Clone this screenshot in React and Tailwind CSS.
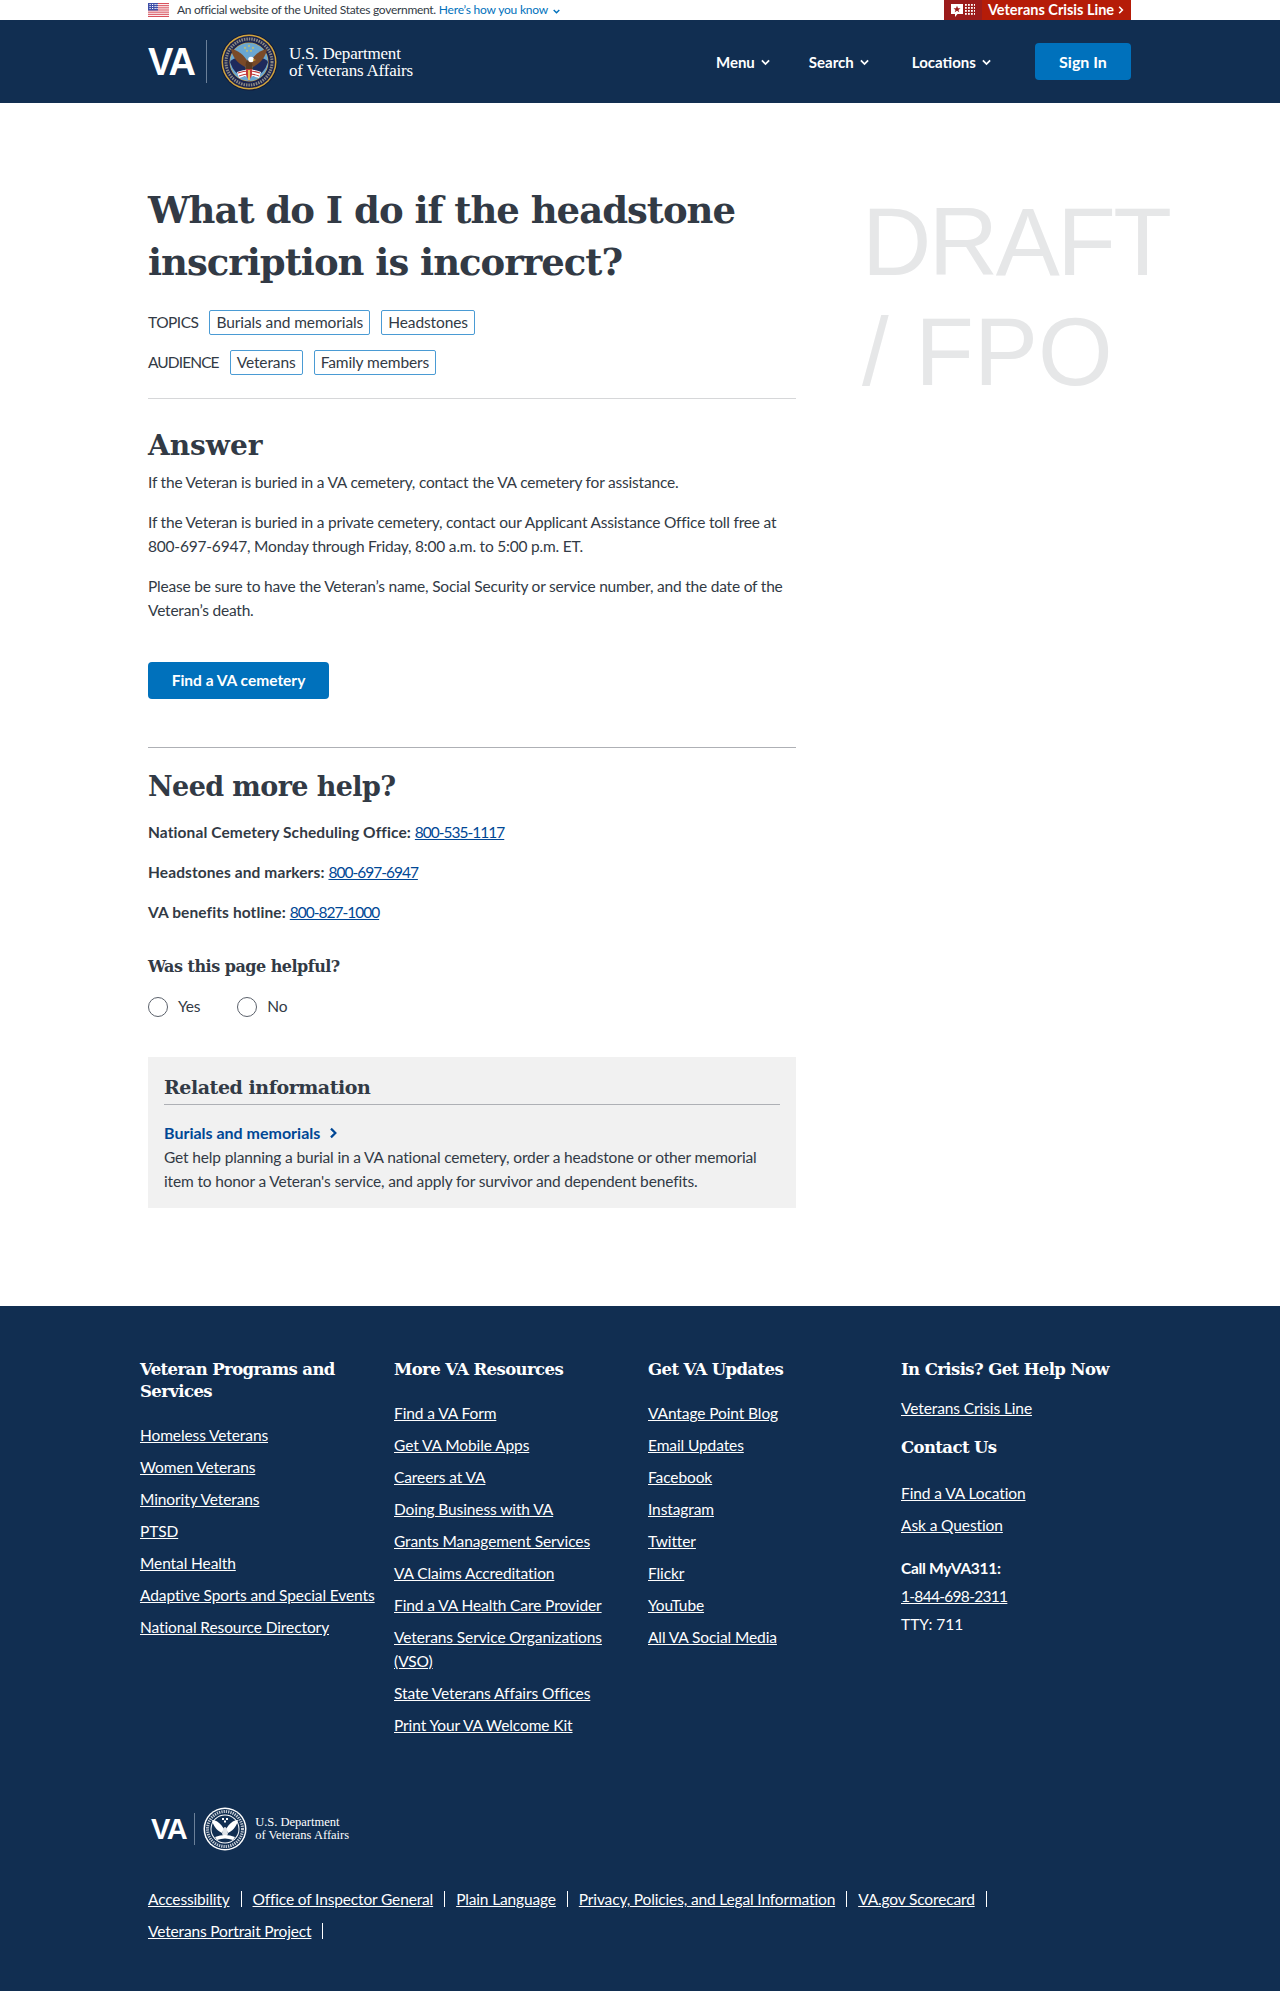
import React from "react";

const sans = "font-['Lato','Noto_Sans',sans-serif]";
const slab = "font-['DejaVu_Serif','Liberation_Serif',serif]";

function Chevron({ className = "" }) {
  return (
    <svg viewBox="0 0 10 7" className={className} fill="none" stroke="currentColor" strokeWidth="2">
      <path d="M1 1.2 5 5.2 9 1.2" />
    </svg>
  );
}

function Flag() {
  return (
    <svg viewBox="0 0 21 14" className="w-[21px] h-[14px] shrink-0">
      <rect width="21" height="14" fill="#fff" />
      {[0, 2.15, 4.3, 6.45, 8.6, 10.75, 12.9].map((y) => (
        <rect key={y} y={y} width="21" height="1.1" fill="#d8505c" />
      ))}
      <rect width="10" height="7.5" fill="#3f4fa8" />
      {[1, 3, 5].map((y) =>
        [1.5, 4, 6.5, 8.5].map((x) => <rect key={x + "-" + y} x={x} y={y} width="1.2" height="1" fill="#fff" />)
      )}
    </svg>
  );
}

function ColorSeal() {
  return (
    <svg viewBox="0 0 58 58" className="w-[58px] h-[58px] shrink-0">
      <circle cx="29" cy="29" r="28.5" fill="#111a3a" />
      <circle cx="29" cy="29" r="27.5" fill="#d3a63c" />
      <circle cx="29" cy="29" r="26" fill="#1b2450" />
      <circle cx="29" cy="29" r="23" fill="none" stroke="#b9b39a" strokeWidth="3" strokeDasharray="1.5 1" opacity=".7" />
      <circle cx="29" cy="29" r="19.5" fill="#d3a63c" />
      <circle cx="29" cy="29" r="19" fill="#6aa7d2" />
      <path d="M10 29 Q16 21 25 30 L25 44 Q14 42 10 29Z" fill="#1e2a5c" />
      <path d="M48 29 Q42 21 33 30 L33 44 Q44 42 48 29Z" fill="#1e2a5c" />
      <path d="M28 29 C24 22 18 17 11 16 C12 23 17 30 25 34Z" fill="#7a4a28" />
      <path d="M30 29 C34 22 40 17 47 16 C46 23 41 30 33 34Z" fill="#7a4a28" />
      <path d="M26 29 Q29 24 32 29 L33 36 L29 41 L25 36Z" fill="#5c3a20" />
      <circle cx="31" cy="26.5" r="2.8" fill="#fff" />
      <path d="M33 26 l3 1 -3 1z" fill="#e0b030" />
      <path d="M17 39 Q29 34 41 39 L39 45 Q29 41 19 45Z" fill="#fff" />
      <path d="M18 40 Q29 36 40 40 M19 43 Q29 39 39 43" stroke="#c23a3a" strokeWidth="1.2" fill="none" />
      <path d="M26 36 h6 v6 l-3 6 -3 -6z" fill="#c23a3a" />
      <path d="M28 37 h2 v10 h-2z" fill="#e8c25a" />
      {[[25, 15], [29, 13], [33, 15], [27, 18], [31, 18]].map(([x, y]) => (
        <path key={x + "" + y} d={`M${x} ${y - 1.5} L${x + 1} ${y + 1} L${x - 1.3} ${y - 0.5} H${x + 1.3} L${x - 1} ${y + 1}Z`} fill="#e8c84a" />
      ))}
    </svg>
  );
}

function WhiteSeal() {
  return (
    <svg viewBox="0 0 44 44" className="w-[44px] h-[44px] shrink-0">
      <circle cx="22" cy="22" r="21.5" fill="#fff" />
      <circle cx="22" cy="22" r="20" fill="#112e51" />
      <circle cx="22" cy="22" r="17.5" fill="none" stroke="#fff" strokeWidth="3" strokeDasharray="1.3 1" opacity=".75" />
      <circle cx="22" cy="22" r="14.5" fill="#fff" />
      <circle cx="22" cy="22" r="13.5" fill="#112e51" />
      <path d="M21 22 C18 17 14 13 9 13 C10 18 13 23 19 26Z" fill="#fff" />
      <path d="M23 22 C26 17 30 13 35 13 C34 18 31 23 25 26Z" fill="#fff" />
      <path d="M20 22 Q22 18 24 22 L25 27 L22 31 L19 27Z" fill="#dfe3e8" />
      <path d="M12 30 Q22 26 32 30 L30 33 Q22 30 14 33Z" fill="#fff" />
      <path d="M19 11h2v2h-2z M23 11h2v2h-2z M21 13.5h2v2h-2z" fill="#fff" />
    </svg>
  );
}

function CrisisIcon() {
  return (
    <svg viewBox="0 0 24 15" className="w-[24px] h-[15px]">
      <path d="M0 1h12v10H6.5L4 14v-3H0z" fill="#fff" />
      <path d="M6 2.8 L7 5.3 H9.5 L7.5 6.9 L8.3 9.3 L6 7.8 L3.7 9.3 L4.5 6.9 L2.5 5.3 H5Z" fill="#9b1c1c" />
      {[15, 18, 21, 24].map((x) =>
        [2, 5, 8, 11].map((y) => <rect key={x + "-" + y} x={x - 1} y={y - 1} width="1.8" height="1.8" fill="#fff" />)
      )}
    </svg>
  );
}

function Tag({ children }) {
  return (
    <span className="inline-flex h-[25px] items-center rounded-[2px] border border-[#4a9bd4] px-[6px] text-[15.5px] tracking-[-0.1px] text-[#323a45]">
      {children}
    </span>
  );
}

function NavItem({ children, className = "" }) {
  return (
    <span className={`flex items-center gap-[6px] text-[15px] font-bold tracking-normal text-white ${className}`}>
      {children}
      <Chevron className="w-[9px] h-[7px]" />
    </span>
  );
}

function FootLink({ children }) {
  return <a className="block text-[15.5px] leading-[24px] tracking-[-0.1px] text-white underline">{children}</a>;
}

function FootCol({ title, links, mb = "mb-[20px]", titleClass = "text-[16.5px] tracking-[-0.6px]" }) {
  return (
    <div className="pr-[16px]">
      <h3 className={`${slab} ${mb} ${titleClass} font-bold leading-[22px] text-white`}>{title}</h3>
      <div className="flex flex-col gap-y-[8px]">
        {links.map((l) => (
          <FootLink key={l}>{l}</FootLink>
        ))}
      </div>
    </div>
  );
}

function Radio({ label }) {
  return (
    <label className="flex items-center gap-[10px]">
      <span className="h-[20px] w-[20px] rounded-full border border-[#5b616b] bg-white" />
      <span className="text-[15.5px] tracking-[-0.2px]">{label}</span>
    </label>
  );
}

function Phone({ children }) {
  return <a className="font-normal tracking-[-1px] text-[#004795] underline">{children}</a>;
}

export default function App() {
  return (
    <div className={`${sans} w-[1280px] h-[1991px] bg-white text-[#323a45]`}>
      {/* Government banner */}
      <div className="h-[20px] bg-white">
        <div className="ml-[148px] flex h-full w-[983px] items-center">
          <Flag />
          <span className="ml-[8px] text-[12px] tracking-[-0.3px] text-[#323a45]">An official website of the United States government.</span>
          <span className="ml-[3px] text-[12px] tracking-[-0.2px] text-[#0071bc]">Here’s how you know</span>
          <Chevron className="ml-[5px] mt-[2px] h-[5px] w-[7px] text-[#0071bc]" />
          <div className="ml-auto flex h-full w-[187px] items-stretch">
            <div className="flex w-[38px] items-center justify-center bg-[#9b1c1c]">
              <CrisisIcon />
            </div>
            <div className="flex flex-1 items-center justify-center gap-[3px] bg-[#b51c08] text-[14.5px] font-bold text-white">
              Veterans Crisis Line
              <Chevron className="h-[6px] w-[8px] -rotate-90" />
            </div>
          </div>
        </div>
      </div>

      {/* Header */}
      <header className="h-[83px] bg-[#112e51]">
        <div className="ml-[148px] flex h-full w-[983px] items-center">
          <span className="font-['Liberation_Sans',sans-serif] text-[38px] font-bold leading-none tracking-[-2px] text-white">VA</span>
          <span className="ml-[12px] h-[43px] w-px bg-[#6b8099]" />
          <span className="ml-[13px]"><ColorSeal /></span>
          <div className="ml-[11px] font-['Liberation_Serif',serif] text-[17px] leading-[17px] tracking-[-0.2px] text-white">
            <div>U.S. Department</div>
            <div>of Veterans Affairs</div>
          </div>
          <NavItem className="ml-[303px] mt-[1px]">Menu</NavItem>
          <NavItem className="ml-[39px] mt-[1px]">Search</NavItem>
          <NavItem className="ml-[43px] mt-[1px]">Locations</NavItem>
          <a className="ml-auto flex h-[37px] w-[96px] items-center justify-center rounded-[4px] bg-[#0071bc] text-[16px] font-bold text-white">
            Sign In
          </a>
        </div>
      </header>

      {/* Main */}
      <main className="ml-[148px] flex h-[1203px] w-[983px]">
        <div className="w-[648px] shrink-0">
          <h1 className={`${slab} mt-[81px] text-[37px] font-bold leading-[52px] tracking-[-1px]`}>
            What do I do if the headstone inscription is incorrect?
          </h1>
          <div className="mt-[22px] flex items-center gap-[11px]">
            <span className="text-[15.5px] tracking-[-0.5px]">TOPICS</span>
            <Tag>Burials and memorials</Tag>
            <Tag>Headstones</Tag>
          </div>
          <div className="mt-[15px] flex items-center gap-[11px]">
            <span className="text-[15.5px] tracking-[-0.9px]">AUDIENCE</span>
            <Tag>Veterans</Tag>
            <Tag>Family members</Tag>
          </div>
          <hr className="mt-[23px] border-0 border-t border-[#d6d7d9]" />
          <h2 className={`${slab} mt-[27px] text-[28px] font-bold leading-[40px]`}>Answer</h2>
          <div className="mt-[4px] text-[15.5px] leading-[24px] tracking-[-0.2px]">
            <p>If the Veteran is buried in a VA cemetery, contact the VA cemetery for assistance.</p>
            <p className="mt-[16px]">
              If the Veteran is buried in a private cemetery, contact our Applicant Assistance Office toll free at
              800-697-6947, Monday through Friday, 8:00 a.m. to 5:00 p.m. ET.
            </p>
            <p className="mt-[16px]">
              Please be sure to have the Veteran’s name, Social Security or service number, and the date of the Veteran’s death.
            </p>
          </div>
          <a className="mt-[40px] flex h-[37px] w-[181px] items-center justify-center rounded-[4px] bg-[#0071bc] text-[15.5px] font-bold text-white">
            Find a VA cemetery
          </a>
          <hr className="mt-[48px] border-0 border-t border-[#aeb0b5]" />
          <h2 className={`${slab} mt-[19px] text-[27px] font-bold leading-[40px] tracking-[-0.6px]`}>Need more help?</h2>
          <div className="mt-[13px] text-[15.5px] leading-[24px]">
            <p><b className="tracking-[0.1px]">National Cemetery Scheduling Office:</b> <Phone>800-535-1117</Phone></p>
            <p className="mt-[16px]"><b className="tracking-[0.1px]">Headstones and markers:</b> <Phone>800-697-6947</Phone></p>
            <p className="mt-[16px]"><b className="tracking-[0.1px]">VA benefits hotline:</b> <Phone>800-827-1000</Phone></p>
          </div>
          <h3 className={`${slab} mt-[31px] text-[16px] font-bold leading-[24px] tracking-[-0.5px]`}>Was this page helpful?</h3>
          <div className="mt-[16px] flex gap-[37px]">
            <Radio label="Yes" />
            <Radio label="No" />
          </div>
          <section className="mt-[39px] h-[151px] bg-[#f1f1f1] px-[16px] pt-[16px]">
            <h3 className={`${slab} border-b border-[#aeb0b5] pb-[3px] text-[19px] font-bold leading-[28px] tracking-[-0.45px]`}>Related information</h3>
            <a className="mt-[16px] flex items-center gap-[8px] text-[16px] font-bold leading-[24px] text-[#004795]">
              Burials and memorials
              <Chevron className="h-[8px] w-[11px] -rotate-90" />
            </a>
            <p className="text-[15.5px] leading-[24px] tracking-[-0.15px]">
              Get help planning a burial in a VA national cemetery, order a headstone or other memorial item to honor a Veteran's service, and apply for survivor and dependent benefits.
            </p>
          </section>
        </div>
        <div className="ml-[66px] mt-[84px] whitespace-nowrap font-['Liberation_Sans',sans-serif] text-[96px] leading-[110px] text-[#e6e7e8]">
          <div className="tracking-[-2.5px]">DRAFT</div>
          <div>/ FPO</div>
        </div>
      </main>

      {/* Footer */}
      <footer className="h-[685px] bg-[#112e51] text-white">
        <div className="mx-auto grid w-[1000px] grid-cols-[254px_254px_253px_239px] pt-[53px]">
          <FootCol
            title={<>Veteran Programs and<br />Services</>}
            links={["Homeless Veterans", "Women Veterans", "Minority Veterans", "PTSD", "Mental Health", "Adaptive Sports and Special Events", "National Resource Directory"]}
          />
          <FootCol
            title="More VA Resources"
            links={["Find a VA Form", "Get VA Mobile Apps", "Careers at VA", "Doing Business with VA", "Grants Management Services", "VA Claims Accreditation", "Find a VA Health Care Provider", "Veterans Service Organizations (VSO)", "State Veterans Affairs Offices", "Print Your VA Welcome Kit"]}
          />
          <FootCol
            title="Get VA Updates"
            links={["VAntage Point Blog", "Email Updates", "Facebook", "Instagram", "Twitter", "Flickr", "YouTube", "All VA Social Media"]}
          />
          <div>
            <FootCol title="In Crisis? Get Help Now" mb="mb-[15px]" links={["Veterans Crisis Line"]} />
            <div className="mt-[17px]">
              <FootCol title="Contact Us" mb="mb-[22px]" links={["Find a VA Location", "Ask a Question"]} />
            </div>
            <div className="mt-[17px] text-[15.5px] leading-[28px]">
              <div className="font-bold tracking-[-0.3px]">Call MyVA311:</div>
              <a className="underline tracking-[-0.7px]">1-844-698-2311</a>
              <div>TTY: 711</div>
            </div>
          </div>
        </div>
        <div className="ml-[148px] w-[983px]">
          <div className="mt-[70px] flex h-[44px] items-center">
            <span className="ml-[3px] font-['Liberation_Sans',sans-serif] text-[29px] font-bold leading-none tracking-[-1.5px]">VA</span>
            <span className="ml-[8px] h-[32px] w-px bg-[#6b8099]" />
            <span className="ml-[8px]"><WhiteSeal /></span>
            <div className="ml-[8px] font-['Liberation_Serif',serif] text-[12.5px] leading-[13px]">
              <div>U.S. Department</div>
              <div>of Veterans Affairs</div>
            </div>
          </div>
          <div className="mt-[32px] flex w-[900px] flex-wrap text-[15.5px] leading-[32px] tracking-[-0.15px]">
            {["Accessibility", "Office of Inspector General", "Plain Language", "Privacy, Policies, and Legal Information", "VA.gov Scorecard", "Veterans Portrait Project"].map((l) => (
              <span key={l} className="mr-[11px] flex items-center">
                <a className="underline">{l}</a>
                <span className="ml-[11px] h-[16px] w-px bg-white" />
              </span>
            ))}
          </div>
        </div>
      </footer>
    </div>
  );
}
